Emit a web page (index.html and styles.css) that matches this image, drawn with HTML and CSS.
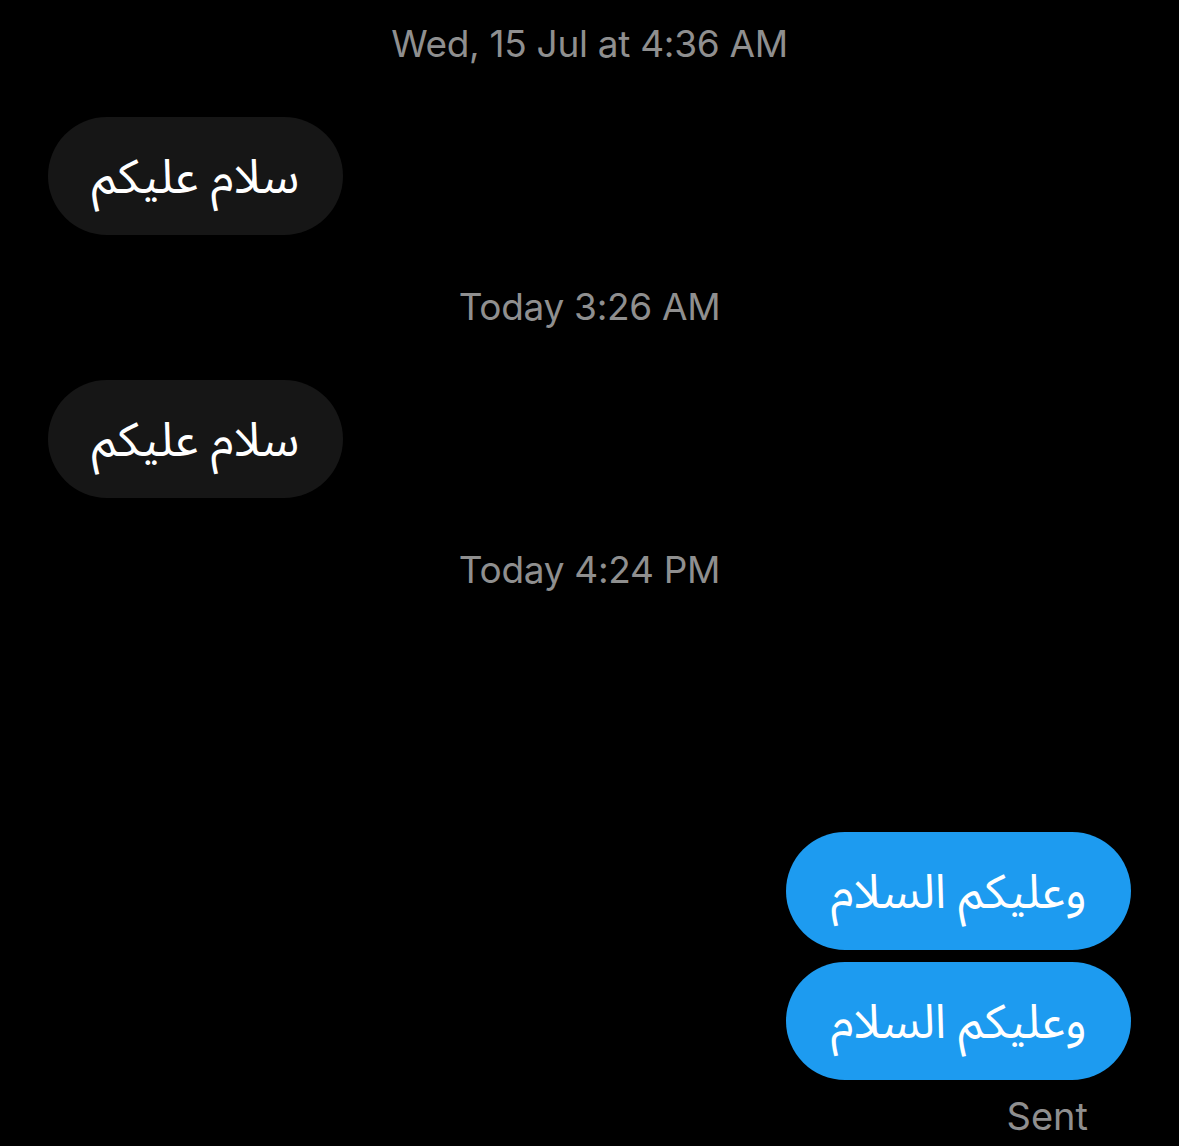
FILE: index.html
```html
<!DOCTYPE html>
<html lang="en">
<head>
<meta charset="utf-8">
<link rel="stylesheet" href="styles.css">
</head>
<body>
<div class="thread">
  <div class="ts">Wed, 15 Jul at 4:36 AM</div>
  <div class="row in first"><div class="bubble recv" dir="rtl">سلام عليكم</div></div>
  <div class="ts gap">Today 3:26 AM</div>
  <div class="row in first"><div class="bubble recv" dir="rtl">سلام عليكم</div></div>
  <div class="ts gap">Today 4:24 PM</div>
  <div class="row out big"><div class="bubble sent" dir="rtl">وعليكم السلام</div></div>
  <div class="row out small"><div class="bubble sent" dir="rtl">وعليكم السلام</div></div>
  <div class="status">Sent</div>
</div>
</body>
</html>
```
FILE: styles.css
```css
html, body {
  margin: 0;
  padding: 0;
  background: #000;
}
.thread {
  display: flex;
  flex-direction: column;
  padding: 22px 48px 0 48px;
  font-family: Inter, "Noto Sans", sans-serif;
}
.ts {
  text-align: center;
  color: #8f8f8f;
  font-size: 37px;
  line-height: 44px;
  height: 44px;
  letter-spacing: -0.3px;
}
.ts.gap {
  margin-top: 50px;
}
.row {
  display: flex;
}
.row.in {
  justify-content: flex-start;
}
.row.first {
  margin-top: 51px;
}
.row.out {
  justify-content: flex-end;
}
.row.big {
  margin-top: 240px;
}
.row.small {
  margin-top: 12px;
}
.bubble {
  height: 118px;
  border-radius: 59px;
  display: flex;
  align-items: center;
  justify-content: center;
  box-sizing: border-box;
  color: #fff;
  font-family: "Noto Sans Arabic", "DejaVu Sans", sans-serif;
  font-size: 47.5px;
  padding-top: 4px;
}
.recv {
  background: #161616;
  width: 295px;
}
.sent {
  background: #1d9bf0;
  width: 345px;
}
.status {
  align-self: flex-end;
  margin-right: 43px;
  margin-top: 14px;
  color: #8f8f8f;
  font-size: 38px;
  line-height: 44px;
}
```
